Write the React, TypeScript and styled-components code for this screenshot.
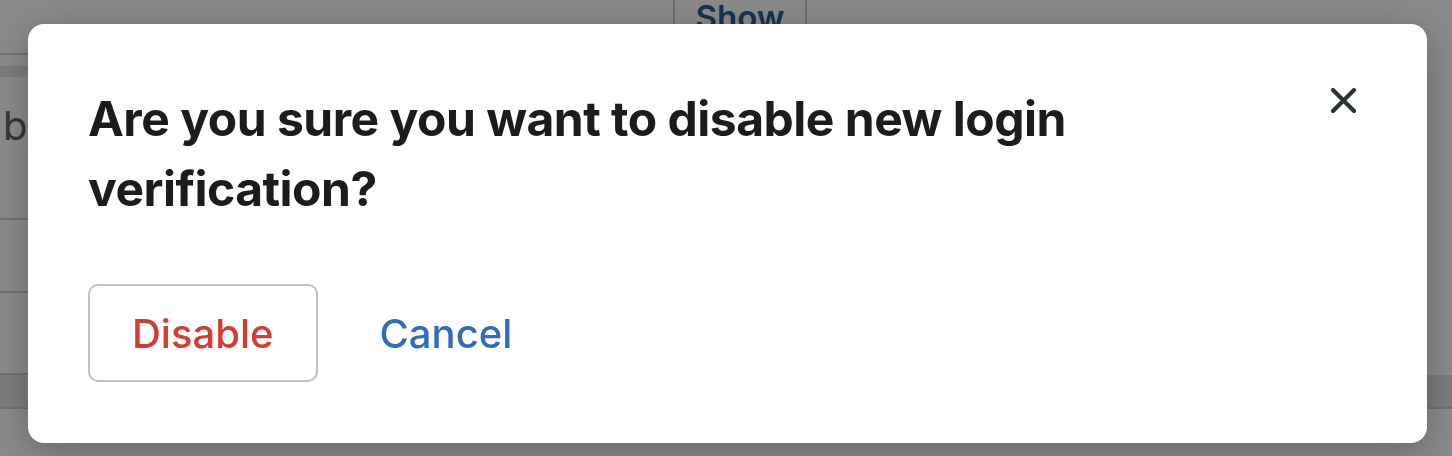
import styled, { createGlobalStyle } from "styled-components";

const GlobalStyle = createGlobalStyle`
  html, body {
    margin: 0;
    padding: 0;
    background: #ffffff;
    overflow: hidden;
  }
  body {
    font-family: "Inter", "Liberation Sans", sans-serif;
  }
`;

const Page = styled.div`
  width: 1452px;
  height: 456px;
  display: flex;
  flex-direction: column;
  background: #ffffff;
`;

const TopBar = styled.div`
  height: 55px;
  width: 1420px;
  display: flex;
  align-items: flex-start;
  padding-left: 673px;
  box-sizing: border-box;
  border-bottom: 2px solid #cdd1d4;
`;

const ShowButton = styled.button`
  margin-top: -18px;
  width: 134px;
  height: 70px;
  border: 2px solid #c4c8cc;
  background: #ffffff;
  color: #2a5a9c;
  font-family: "Inter", "Liberation Sans", sans-serif;
  font-size: 33px;
  font-weight: 600;
`;

const Spacer = styled.div<{ $h: number }>`
  height: ${(p) => p.$h}px;
`;

const Band = styled.div<{ $h: number; $full?: boolean }>`
  height: ${(p) => p.$h}px;
  width: ${(p) => (p.$full ? "100%" : "1420px")};
  background: #e3e5e7;
  border-bottom: ${(p) => (p.$full ? "2px solid #d0d3d6" : "none")};
`;

const ListRow = styled.div<{ $h: number }>`
  height: ${(p) => p.$h}px;
  width: 1420px;
  box-sizing: border-box;
  border-bottom: 2px solid #cdd1d4;
  padding: 24px 0 0 3px;
  font-size: 40px;
  color: #5c666e;
`;

const Overlay = styled.div`
  position: fixed;
  inset: 0;
  background: rgba(0, 0, 0, 0.46);
  display: flex;
  align-items: flex-start;
  padding: 24px 0 0 28px;
`;

const Modal = styled.div`
  width: 1399px;
  height: 419px;
  box-sizing: border-box;
  background: #ffffff;
  border-radius: 16px;
  box-shadow: 0 8px 36px rgba(0, 0, 0, 0.28);
  padding: 60px;
  display: flex;
  flex-direction: column;
  gap: 60px;
`;

const Header = styled.div`
  display: flex;
  align-items: flex-start;
  justify-content: space-between;
  gap: 40px;
`;

const Title = styled.h2`
  margin: 0;
  flex: 1;
  font-size: 48px;
  line-height: 70px;
  font-weight: 700;
  letter-spacing: -0.5px;
  color: #1b1c1e;
`;

const CloseButton = styled.button`
  flex: none;
  width: 48px;
  height: 48px;
  margin-top: -8px;
  padding: 0;
  border: none;
  background: transparent;
  display: flex;
  align-items: center;
  justify-content: center;
  cursor: pointer;
`;

const Actions = styled.div`
  display: flex;
  align-items: center;
  gap: 28px;
`;

const ActionButton = styled.button<{ $tone: "danger" | "link" }>`
  height: 98px;
  box-sizing: border-box;
  padding: 0 ${(p) => (p.$tone === "danger" ? "42px" : "32px")};
  border: 2px solid
    ${(p) => (p.$tone === "danger" ? "#bdc1c5" : "transparent")};
  border-radius: 10px;
  background: #ffffff;
  font-family: "Inter", "Liberation Sans", sans-serif;
  font-size: 40px;
  font-weight: 500;
  color: ${(p) => (p.$tone === "danger" ? "#d63b31" : "#2e6cc0")};
  cursor: pointer;
`;

function CloseIcon() {
  return (
    <svg width="27" height="27" viewBox="0 0 27 27" fill="none">
      <path
        d="M3 3 L24 24 M24 3 L3 24"
        stroke="#2c3338"
        strokeWidth="4.2"
        strokeLinecap="round"
      />
    </svg>
  );
}

function App() {
  return (
    <>
      <GlobalStyle />
      <Page>
        <TopBar>
          <ShowButton>Show</ShowButton>
        </TopBar>
        <Spacer $h={11} />
        <Band $h={11} />
        <ListRow $h={143}>bo</ListRow>
        <ListRow $h={73} />
        <ListRow $h={82} />
        <Band $h={32} $full />
      </Page>
      <Overlay>
        <Modal role="dialog">
          <Header>
            <Title>
              Are you sure you want to disable new login verification?
            </Title>
            <CloseButton aria-label="Close">
              <CloseIcon />
            </CloseButton>
          </Header>
          <Actions>
            <ActionButton $tone="danger">Disable</ActionButton>
            <ActionButton $tone="link">Cancel</ActionButton>
          </Actions>
        </Modal>
      </Overlay>
    </>
  );
}

export default App;
